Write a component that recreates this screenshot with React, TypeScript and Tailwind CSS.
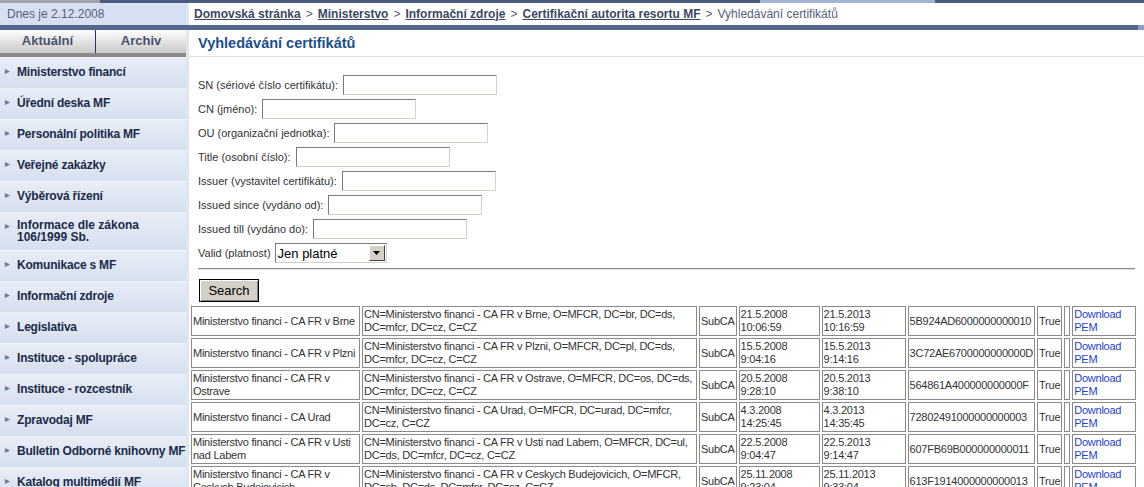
import React from 'react';

const menu: { label: string; tall?: boolean }[] = [
  { label: 'Ministerstvo financí' },
  { label: 'Úřední deska MF' },
  { label: 'Personální politika MF' },
  { label: 'Veřejné zakázky' },
  { label: 'Výběrová řízení' },
  { label: 'Informace dle zákona 106/1999 Sb.', tall: true },
  { label: 'Komunikace s MF' },
  { label: 'Informační zdroje' },
  { label: 'Legislativa' },
  { label: 'Instituce - spolupráce' },
  { label: 'Instituce - rozcestník' },
  { label: 'Zpravodaj MF' },
  { label: 'Bulletin Odborné knihovny MF' },
  { label: 'Katalog multimédií MF' },
];

const fields: { label: string; w: string }[] = [
  { label: 'SN (sériové číslo certifikátu):', w: 'SN' },
  { label: 'CN (jméno):', w: 'CN' },
  { label: 'OU (organizační jednotka):', w: 'OU' },
  { label: 'Title (osobní číslo):', w: 'T' },
  { label: 'Issuer (vystavitel certifikátu):', w: 'I' },
  { label: 'Issued since (vydáno od):', w: 'IS' },
  { label: 'Issued till (vydáno do):', w: 'IT' },
];

type Cert = {
  name: string;
  dn: string;
  from: [string, string];
  to: [string, string];
  serial: string;
};

const certs: Cert[] = [
  {
    name: 'Ministerstvo financi - CA FR v Brne',
    dn: 'CN=Ministerstvo financi - CA FR v Brne, O=MFCR, DC=br, DC=ds, DC=mfcr, DC=cz, C=CZ',
    from: ['21.5.2008', '10:06:59'],
    to: ['21.5.2013', '10:16:59'],
    serial: '5B924AD6000000000010',
  },
  {
    name: 'Ministerstvo financi - CA FR v Plzni',
    dn: 'CN=Ministerstvo financi - CA FR v Plzni, O=MFCR, DC=pl, DC=ds, DC=mfcr, DC=cz, C=CZ',
    from: ['15.5.2008', '9:04:16'],
    to: ['15.5.2013', '9:14:16'],
    serial: '3C72AE6700000000000D',
  },
  {
    name: 'Ministerstvo financi - CA FR v Ostrave',
    dn: 'CN=Ministerstvo financi - CA FR v Ostrave, O=MFCR, DC=os, DC=ds, DC=mfcr, DC=cz, C=CZ',
    from: ['20.5.2008', '9:28:10'],
    to: ['20.5.2013', '9:38:10'],
    serial: '564861A400000000000F',
  },
  {
    name: 'Ministerstvo financi - CA Urad',
    dn: 'CN=Ministerstvo financi - CA Urad, O=MFCR, DC=urad, DC=mfcr, DC=cz, C=CZ',
    from: ['4.3.2008', '14:25:45'],
    to: ['4.3.2013', '14:35:45'],
    serial: '72802491000000000003',
  },
  {
    name: 'Ministerstvo financi - CA FR v Usti nad Labem',
    dn: 'CN=Ministerstvo financi - CA FR v Usti nad Labem, O=MFCR, DC=ul, DC=ds, DC=mfcr, DC=cz, C=CZ',
    from: ['22.5.2008', '9:04:47'],
    to: ['22.5.2013', '9:14:47'],
    serial: '607FB69B000000000011',
  },
  {
    name: 'Ministerstvo financi - CA FR v Ceskych Budejovicich',
    dn: 'CN=Ministerstvo financi - CA FR v Ceskych Budejovicich, O=MFCR, DC=cb, DC=ds, DC=mfcr, DC=cz, C=CZ',
    from: ['25.11.2008', '9:23:04'],
    to: ['25.11.2013', '9:33:04'],
    serial: '613F1914000000000013',
  },
];

function TextBox() {
  return (
    <input
      type="text"
      className="h-[20px] w-[154px] border border-t-[#7a7a7a] border-l-[#7a7a7a] border-r-[#d4d0c8] border-b-[#d4d0c8] bg-white"
    />
  );
}

const td = 'border border-[#8a8a8a] px-px py-px align-middle';

export default function App() {
  return (
    <div className="h-[487px] w-[1144px] overflow-hidden bg-white font-['Liberation_Sans',Arial,sans-serif] text-[11px] leading-[13px] text-[#333]">
      {/* strip of header pictures */}
      <div className="flex h-[3px]">
        <div className="w-[100px] bg-[#9ea4ae]" />
        <div className="w-[660px] bg-[#4a5a80]" />
        <div className="w-[175px] bg-[#a3b3d3]" />
        <div className="flex-1 bg-[#4a5a80]" />
      </div>

      {/* date + breadcrumb */}
      <div className="flex h-[22px]">
        <div className="flex w-[186px] items-center bg-[#d7e0f0] pl-[7px] text-[12px] text-[#55607a]">
          Dnes je 2.12.2008
        </div>
        <div className="w-[3px] bg-[#dfe6f2]" />
        <div className="flex flex-1 items-center gap-[5px] pl-[5px] text-[12px] text-[#55607a]">
          <a className="font-bold text-[#3b4763] underline">Domovská stránka</a>
          <span>&gt;</span>
          <a className="font-bold text-[#3b4763] underline">Ministerstvo</a>
          <span>&gt;</span>
          <a className="font-bold text-[#3b4763] underline">Informační zdroje</a>
          <span>&gt;</span>
          <a className="font-bold text-[#3b4763] underline">Certifikační autorita resortu MF</a>
          <span>&gt;</span>
          <span>Vyhledávání certifikátů</span>
        </div>
      </div>

      <div className="flex h-[5px]">
        <div className="flex-1 bg-[#55668c]" />
        <div className="w-[6px] bg-[#8d9dbd]" />
      </div>

      <div className="flex">
        {/* left column */}
        <div className="flex w-[186px] flex-col bg-[#d7e0f0]">
          <div className="flex h-[27px] flex-col">
            <div className="flex flex-1 bg-gradient-to-b from-white to-[#c9c9c9] text-[13px] font-bold text-[#4a5070]">
              <div className="flex w-[96px] items-center justify-center border-r border-[#1f3570] pb-[3px]">
                Aktuální
              </div>
              <div className="flex flex-1 items-center justify-center pb-[3px]">Archiv</div>
            </div>
            <div className="h-[4px] bg-[#8a8a8a]" />
          </div>
          {menu.map((m) => (
            <div
              key={m.label}
              className={`flex items-center gap-[7px] border-t border-[#eef2f9] bg-gradient-to-b from-[#e8eef8] to-[#d6dfee] pb-[2px] pl-[5px] text-[12px] font-bold leading-[12px] text-[#1b2b48] ${
                m.tall ? 'h-[38px]' : 'h-[31px]'
              }`}
            >
              <span className="self-start pt-[10px] text-[6px] leading-[6px] text-[#6b7a99]">▶</span>
              <span className={m.tall ? 'w-[150px]' : 'whitespace-nowrap tracking-[-0.2px]'}>{m.label}</span>
            </div>
          ))}
        </div>
        <div className="w-[3px] bg-[#dfe6f2]" />

        {/* main */}
        <div className="flex-1">
          <div className="flex h-[27px] items-center border-b border-[#dde2ea] pl-[9px] text-[14.5px] font-bold text-[#1c4e8d]">
            Vyhledávání certifikátů
          </div>

          <div className="flex flex-col gap-[4px] pl-[9px] pt-[18px]">
            {fields.map((f) => (
              <div key={f.w} className="flex h-[20px] items-center gap-[5px]">
                <span>{f.label}</span>
                <TextBox />
              </div>
            ))}
            <div className="flex h-[20px] items-center gap-[4px]">
              <span>Valid (platnost)</span>
              <div className="flex h-[20px] w-[112px] items-center border border-t-[#7a7a7a] border-l-[#7a7a7a] border-r-[#d4d0c8] border-b-[#d4d0c8] bg-white">
                <span className="flex-1 pl-[2px] text-[13px] text-black">Jen platné</span>
                <span className="mr-px flex h-[16px] w-[16px] items-center justify-center border border-t-white border-l-white border-r-[#404040] border-b-[#404040] bg-[#d4d0c8]">
                  <svg width="7" height="4" viewBox="0 0 7 4">
                    <path d="M0 0h7L3.5 4z" fill="#000" />
                  </svg>
                </span>
              </div>
            </div>
          </div>

          <div className="ml-[9px] mr-[9px] mt-[5px] h-[2px] border-t border-[#8a8a8a] border-b border-b-[#e0e0e0]" />

          <div className="pl-[10px] pt-[9px]">
            <button className="h-[23px] w-[60px] border border-black bg-[#d4d0c8] text-[13px] text-black shadow-[inset_1px_1px_0_#fff,inset_-1px_-1px_0_#808080]">
              Search
            </button>
          </div>

          <table className="mt-[2px] table-fixed border-separate border-spacing-[2px] text-[11px] leading-[13px] tracking-[-0.25px] text-[#333]">
            <tbody>
              {certs.map((c) => (
                <tr key={c.serial} className="h-[30px]">
                  <td className={`${td} w-[169px]`}>{c.name}</td>
                  <td className={`${td} w-[335px]`}>{c.dn}</td>
                  <td className={`${td} w-[35px]`}>SubCA</td>
                  <td className={`${td} w-[81px]`}>
                    {c.from[0]}
                    <br />
                    {c.from[1]}
                  </td>
                  <td className={`${td} w-[84px]`}>
                    {c.to[0]}
                    <br />
                    {c.to[1]}
                  </td>
                  <td className={`${td} w-[126px]`}>{c.serial}</td>
                  <td className={`${td} w-[23px]`}>True</td>
                  <td className={`${td} w-[6px]`}></td>
                  <td className={`${td} w-[64px]`}>
                    <a className="text-[#1f3fcc]">
                      Download
                      <br />
                      PEM
                    </a>
                  </td>
                </tr>
              ))}
            </tbody>
          </table>
        </div>
      </div>
    </div>
  );
}
